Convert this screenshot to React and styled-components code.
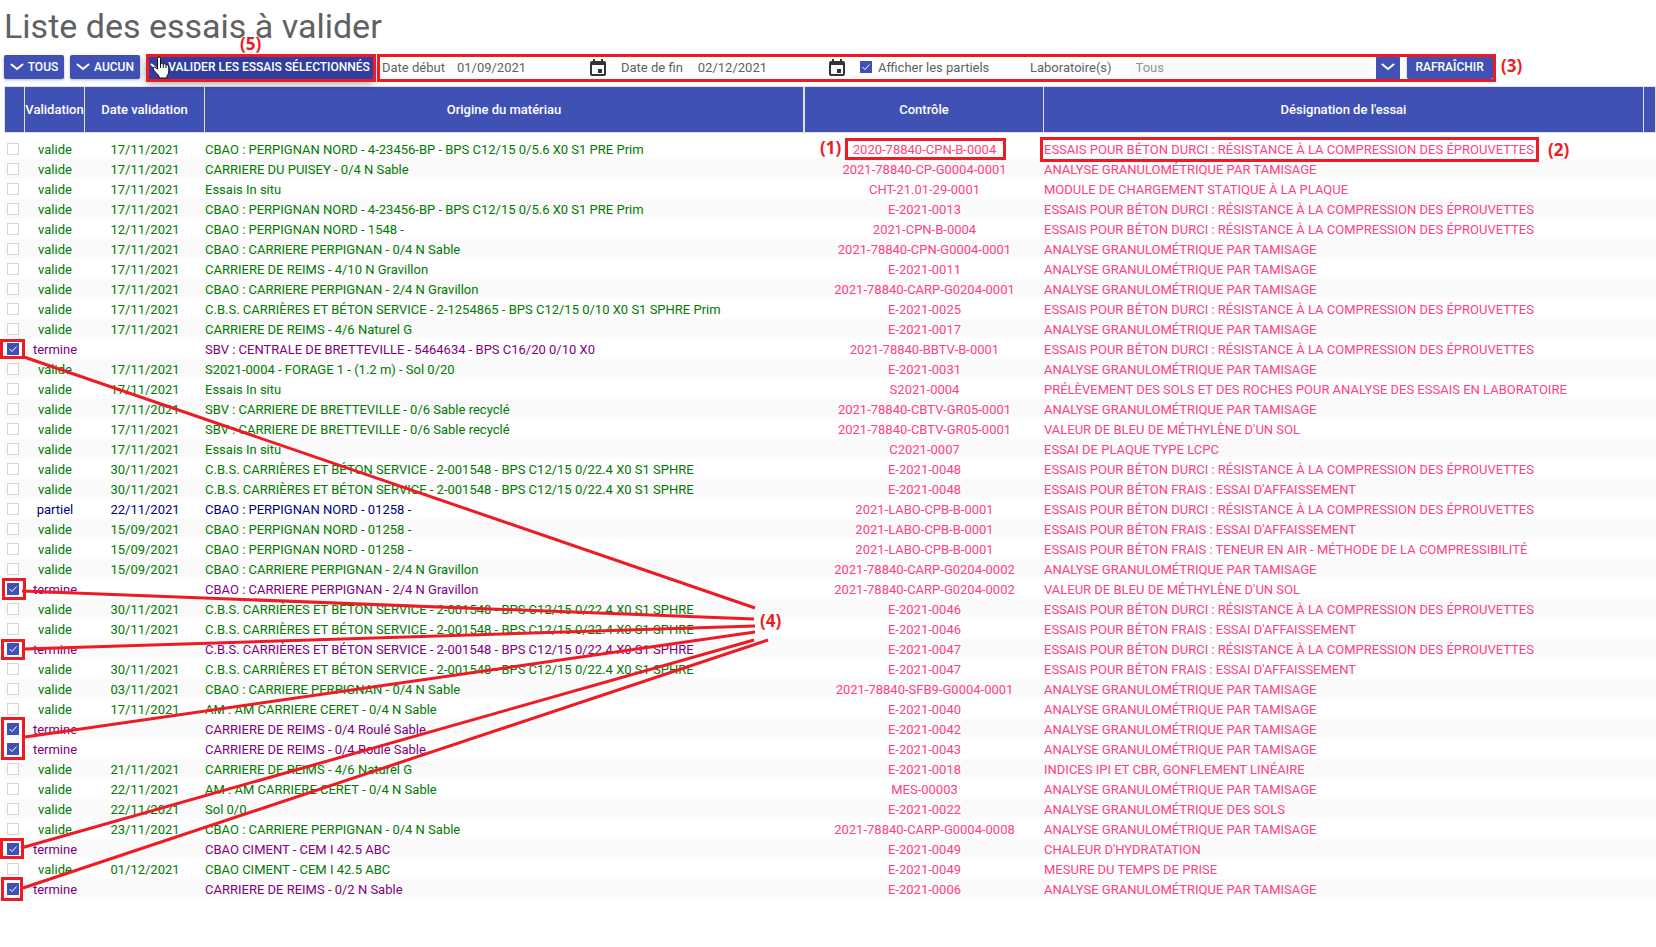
import { useState } from "react";
import styled, { createGlobalStyle } from "styled-components";

const V = "valide";
const T = "termine";
const P = "partiel";
const DURCI = "ESSAIS POUR BÉTON DURCI : RÉSISTANCE À LA COMPRESSION DES ÉPROUVETTES";
const AFFAISSEMENT = "ESSAIS POUR BÉTON FRAIS : ESSAI D'AFFAISSEMENT";
const TAMISAGE = "ANALYSE GRANULOMÉTRIQUE PAR TAMISAGE";
const BLEU = "VALEUR DE BLEU DE MÉTHYLÈNE D'UN SOL";
const CBS = "C.B.S. CARRIÈRES ET BÉTON SERVICE - 2-001548 - BPS C12/15 0/22.4 X0 S1 SPHRE";

const essais = [
  [V, "17/11/2021", "CBAO : PERPIGNAN NORD - 4-23456-BP - BPS C12/15 0/5.6 X0 S1 PRE Prim", "2020-78840-CPN-B-0004", DURCI],
  [V, "17/11/2021", "CARRIERE DU PUISEY - 0/4 N Sable", "2021-78840-CP-G0004-0001", TAMISAGE],
  [V, "17/11/2021", "Essais In situ", "CHT-21.01-29-0001", "MODULE DE CHARGEMENT STATIQUE À LA PLAQUE"],
  [V, "17/11/2021", "CBAO : PERPIGNAN NORD - 4-23456-BP - BPS C12/15 0/5.6 X0 S1 PRE Prim", "E-2021-0013", DURCI],
  [V, "12/11/2021", "CBAO : PERPIGNAN NORD - 1548 -", "2021-CPN-B-0004", DURCI],
  [V, "17/11/2021", "CBAO : CARRIERE PERPIGNAN - 0/4 N Sable", "2021-78840-CPN-G0004-0001", TAMISAGE],
  [V, "17/11/2021", "CARRIERE DE REIMS - 4/10 N Gravillon", "E-2021-0011", TAMISAGE],
  [V, "17/11/2021", "CBAO : CARRIERE PERPIGNAN - 2/4 N Gravillon", "2021-78840-CARP-G0204-0001", TAMISAGE],
  [V, "17/11/2021", "C.B.S. CARRIÈRES ET BÉTON SERVICE - 2-1254865 - BPS C12/15 0/10 X0 S1 SPHRE Prim", "E-2021-0025", DURCI],
  [V, "17/11/2021", "CARRIERE DE REIMS - 4/6 Naturel G", "E-2021-0017", TAMISAGE],
  [T, "", "SBV : CENTRALE DE BRETTEVILLE - 5464634 - BPS C16/20 0/10 X0", "2021-78840-BBTV-B-0001", DURCI],
  [V, "17/11/2021", "S2021-0004 - FORAGE 1 - (1.2 m) - Sol 0/20", "E-2021-0031", TAMISAGE],
  [V, "17/11/2021", "Essais In situ", "S2021-0004", "PRÉLÈVEMENT DES SOLS ET DES ROCHES POUR ANALYSE DES ESSAIS EN LABORATOIRE"],
  [V, "17/11/2021", "SBV : CARRIERE DE BRETTEVILLE - 0/6 Sable recyclé", "2021-78840-CBTV-GR05-0001", TAMISAGE],
  [V, "17/11/2021", "SBV : CARRIERE DE BRETTEVILLE - 0/6 Sable recyclé", "2021-78840-CBTV-GR05-0001", BLEU],
  [V, "17/11/2021", "Essais In situ", "C2021-0007", "ESSAI DE PLAQUE TYPE LCPC"],
  [V, "30/11/2021", CBS, "E-2021-0048", DURCI],
  [V, "30/11/2021", CBS, "E-2021-0048", AFFAISSEMENT],
  [P, "22/11/2021", "CBAO : PERPIGNAN NORD - 01258 -", "2021-LABO-CPB-B-0001", DURCI],
  [V, "15/09/2021", "CBAO : PERPIGNAN NORD - 01258 -", "2021-LABO-CPB-B-0001", AFFAISSEMENT],
  [V, "15/09/2021", "CBAO : PERPIGNAN NORD - 01258 -", "2021-LABO-CPB-B-0001", "ESSAIS POUR BÉTON FRAIS : TENEUR EN AIR - MÉTHODE DE LA COMPRESSIBILITÉ"],
  [V, "15/09/2021", "CBAO : CARRIERE PERPIGNAN - 2/4 N Gravillon", "2021-78840-CARP-G0204-0002", TAMISAGE],
  [T, "", "CBAO : CARRIERE PERPIGNAN - 2/4 N Gravillon", "2021-78840-CARP-G0204-0002", BLEU],
  [V, "30/11/2021", CBS, "E-2021-0046", DURCI],
  [V, "30/11/2021", CBS, "E-2021-0046", AFFAISSEMENT],
  [T, "", CBS, "E-2021-0047", DURCI],
  [V, "30/11/2021", CBS, "E-2021-0047", AFFAISSEMENT],
  [V, "03/11/2021", "CBAO : CARRIERE PERPIGNAN - 0/4 N Sable", "2021-78840-SFB9-G0004-0001", TAMISAGE],
  [V, "17/11/2021", "AM : AM CARRIERE CERET - 0/4 N Sable", "E-2021-0040", TAMISAGE],
  [T, "", "CARRIERE DE REIMS - 0/4 Roulé Sable", "E-2021-0042", TAMISAGE],
  [T, "", "CARRIERE DE REIMS - 0/4 Roulé Sable", "E-2021-0043", TAMISAGE],
  [V, "21/11/2021", "CARRIERE DE REIMS - 4/6 Naturel G", "E-2021-0018", "INDICES IPI ET CBR, GONFLEMENT LINÉAIRE"],
  [V, "22/11/2021", "AM : AM CARRIERE CERET - 0/4 N Sable", "MES-00003", TAMISAGE],
  [V, "22/11/2021", "Sol 0/0", "E-2021-0022", "ANALYSE GRANULOMÉTRIQUE DES SOLS"],
  [V, "23/11/2021", "CBAO : CARRIERE PERPIGNAN - 0/4 N Sable", "2021-78840-CARP-G0004-0008", TAMISAGE],
  [T, "", "CBAO CIMENT - CEM I 42.5 ABC", "E-2021-0049", "CHALEUR D'HYDRATATION"],
  [V, "01/12/2021", "CBAO CIMENT - CEM I 42.5 ABC", "E-2021-0049", "MESURE DU TEMPS DE PRISE"],
  [T, "", "CARRIERE DE REIMS - 0/2 N Sable", "E-2021-0006", TAMISAGE],
];

const colors = { valide: "#007a00", termine: "#800080", partiel: "#000080" };

// x, y, width, height of the red frames
const frames = [
  [146, 54, 230, 28],
  [377, 54, 1119, 28],
  [845, 138, 161, 22],
  [1040, 137, 499, 25],
  [0, 339, 25, 20],
  [2, 578, 24, 22],
  [1, 639, 24, 21],
  [1, 717, 24, 43],
  [0, 838, 24, 21],
  [1, 877, 22, 24],
];

const lines = [
  [24, 357, 755, 608],
  [22, 591, 754, 619],
  [24, 649, 755, 626],
  [25, 737, 755, 632],
  [21, 848, 754, 640],
  [23, 888, 768, 640],
];

const labels = [
  ["(1)", 820, 136],
  ["(2)", 1548, 138],
  ["(3)", 1501, 54],
  ["(4)", 760, 609],
  ["(5)", 240, 32],
];

const Chevron = () => (
  <svg width="14" height="8" viewBox="0 0 14 8" aria-hidden="true">
    <path d="M1.5 1.5 L7 6 L12.500 1.500" fill="none" stroke="#fff" strokeWidth="2" strokeLinecap="round" />
  </svg>
);

const CalendarIcon = () => (
  <svg width="16" height="17" viewBox="0 0 16 17" aria-hidden="true">
    <path
      fill="#333"
      fillRule="evenodd"
      d="M3 0h2v2h6V0h2v2h1q2 0 2 2v11q0 2-2 2H2q-2 0-2-2V4q0-2 2-2h1zM2 6v9h12V6zM8 10h4v4H8z"
    />
  </svg>
);

const Main = () => {
  const [checked, setChecked] = useState(essais.map((e) => e[0] === T));
  const [debut, setDebut] = useState("01/09/2021");
  const [fin, setFin] = useState("02/12/2021");
  const [partiels, setPartiels] = useState(true);

  const setAll = (value) => {
    setChecked(essais.map(() => value));
  };
  const toggle = (index) => {
    setChecked(checked.map((c, i) => (i === index ? !c : c)));
  };

  return (
    <PageDiv>
      <GlobalStyle />
      <Title>Liste des essais à valider</Title>
      <ToolbarDiv>
        <ActionButton $width={60} onClick={() => setAll(true)}>
          <Chevron />
          TOUS
        </ActionButton>
        <ActionButton $width={70} onClick={() => setAll(false)}>
          <Chevron />
          AUCUN
        </ActionButton>
        <ActionButton $width={228} $active>
          <Chevron />
          VALIDER LES ESSAIS SÉLECTIONNÉS
        </ActionButton>
        <FilterDiv>
          <DateDiv $gap={12}>
            <label htmlFor="debut">Date début</label>
            <DateInput id="debut" value={debut} onChange={(e) => setDebut(e.target.value)} />
            <IconButton aria-label="Choisir la date de début">
              <CalendarIcon />
            </IconButton>
          </DateDiv>
          <DateDiv $gap={15}>
            <label htmlFor="fin">Date de fin</label>
            <DateInput id="fin" value={fin} onChange={(e) => setFin(e.target.value)} />
            <IconButton aria-label="Choisir la date de fin">
              <CalendarIcon />
            </IconButton>
          </DateDiv>
          <CheckLabel>
            <CheckBox type="checkbox" checked={partiels} onChange={() => setPartiels(!partiels)} />
            Afficher les partiels
          </CheckLabel>
          <LaboDiv>
            <label htmlFor="labo">Laboratoire(s)</label>
            <LaboInput id="labo" placeholder="Tous" />
            <DropButton aria-label="Ouvrir la liste des laboratoires">
              <Chevron />
            </DropButton>
          </LaboDiv>
          <ActionButton $width={86}>RAFRAÎCHIR</ActionButton>
        </FilterDiv>
      </ToolbarDiv>

      <Table>
        <colgroup>
          <Col $width={21} />
          <Col $width={60} />
          <Col $width={120} />
          <Col $width={600} />
          <Col $width={239} />
          <Col $width={600} />
          <col />
        </colgroup>
        <thead>
          <tr>
            <Th />
            <Th>Validation</Th>
            <Th>Date validation</Th>
            <Th $wide>Origine du matériau</Th>
            <Th>Contrôle</Th>
            <Th>Désignation de l'essai</Th>
            <Th />
          </tr>
        </thead>
        <tbody>
          <SpacerTr>
            <td colSpan={7} />
          </SpacerTr>
          {essais.map(([statut, date, origine, controle, designation], i) => (
            <Tr key={i} $odd={i % 2 === 1} $color={colors[statut]}>
              <CheckTd>
                <CheckBox
                  type="checkbox"
                  aria-label={controle}
                  checked={checked[i]}
                  onChange={() => toggle(i)}
                />
              </CheckTd>
              <Td $center>{statut}</Td>
              <Td $center>{date}</Td>
              <Td>{origine}</Td>
              <Td $center>
                <Link href="#controle">{controle}</Link>
              </Td>
              <Td>
                <Link href="#essai">{designation}</Link>
              </Td>
              <Td />
            </Tr>
          ))}
        </tbody>
      </Table>

      <NotesSvg aria-hidden="true">
        {lines.map(([x1, y1, x2, y2]) => (
          <line key={y1} x1={x1} y1={y1} x2={x2} y2={y2} />
        ))}
        {frames.map(([x, y, w, h]) => (
          <rect key={x + "-" + y} x={x + 1.5} y={y + 1.5} width={w - 3} height={h - 3} />
        ))}
      </NotesSvg>
      {labels.map(([text, x, y]) => (
        <NoteSpan key={text} $x={x} $y={y}>
          {text}
        </NoteSpan>
      ))}
      <CursorSvg viewBox="0 0 18 23" aria-hidden="true">
        <path
          d="M5.500 13V2.500Q5.500 1 7 1T8.500 2.500V8Q8.500 7 10 7T11.300 8.500Q11.500 7.600 12.800 7.800T14 9.300Q14.500 8.600 15.500 9T16.800 11V15Q16.800 18 15 20V22H7V20L2 14.500Q.5 12.500 1.500 11.500T4 12Z"
          fill="#fff"
          stroke="#111"
        />
        <path d="M8.500 8V12M11.300 8.500V12M14 9.300V12" stroke="#111" fill="none" />
      </CursorSvg>
    </PageDiv>
  );
};

export default Main;

const GlobalStyle = createGlobalStyle`
  * {
    box-sizing: border-box;
  }
  body {
    margin: 0;
    background: #fff;
    color: #616161;
    font-family: Roboto, sans-serif;
    font-size: 13px;
  }
  button, input {
    font: inherit;
  }
`;

const PageDiv = styled.div`
  position: relative;
  padding: 0 0 48px 4px;
  overflow: hidden;
`;

const Title = styled.h1`
  margin: 0;
  height: 55px;
  padding-top: 5px;
  color: #616161;
  font-size: 34px;
  font-weight: 400;
  line-height: 42px;
`;

const ToolbarDiv = styled.div`
  display: flex;
  gap: 6px;
  height: 31px;
`;

const ActionButton = styled.button`
  display: flex;
  align-items: center;
  justify-content: center;
  flex: none;
  gap: 4px;
  width: ${(props) => props.$width}px;
  height: 24px;
  padding: 0;
  border: 0;
  border-radius: 2px;
  background: ${(props) => (props.$active ? "#303f9f" : "#3f51b5")};
  color: #fff;
  font-size: 12px;
  font-weight: 500;
  line-height: 16px;
  white-space: nowrap;
  box-shadow: ${(props) =>
    props.$active ? "0 4px 10px rgba(0, 0, 0, 0.4)" : "0 1px 3px rgba(0, 0, 0, 0.3)"};
`;

const FilterDiv = styled.div`
  display: flex;
  flex: none;
  height: 24px;
  padding-left: 2px;
  white-space: nowrap;
`;

const DateDiv = styled.div`
  display: flex;
  align-items: center;
  gap: ${(props) => props.$gap}px;
  width: 224px;
  margin-right: 15px;
`;

const DateInput = styled.input`
  flex: 1;
  min-width: 0;
  padding: 0;
  border: 0;
  background: none;
  color: #616161;
`;

const IconButton = styled.button`
  display: flex;
  padding: 0;
  border: 0;
  background: none;
`;

const CheckLabel = styled.label`
  display: flex;
  align-items: center;
  gap: 6px;
  width: 170px;
`;

const CheckBox = styled.input`
  display: block;
  appearance: none;
  width: 12px;
  height: 12px;
  margin: 0;
  border: 1px solid #d6d6d6;
  background: #fff;

  &:checked {
    border-color: #3f51b5;
    background: #3f51b5
      url("data:image/svg+xml,%3Csvg xmlns='http://www.w3.org/2000/svg' viewBox='0 0 10 10'%3E%3Cpath d='M1.500 5L4 7.500L8.500 2.500' fill='none' stroke='white'/%3E%3C/svg%3E");
  }
`;

const LaboDiv = styled.div`
  display: flex;
  align-items: center;
  margin-right: 7px;
`;

const LaboInput = styled.input`
  width: 240px;
  height: 22px;
  margin: 0 6px 0 18px;
  padding: 0 6px;
  border: 0;
  background: #fafafa;

  &::placeholder {
    color: #949494;
  }
`;

const DropButton = styled.button`
  display: flex;
  align-items: center;
  justify-content: center;
  width: 24px;
  height: 24px;
  padding: 0;
  border: 0;
  background: #3f51b5;
`;

const Table = styled.table`
  width: 100%;
  table-layout: fixed;
  border-collapse: separate;
  border-spacing: 0;
`;

const Col = styled.col`
  width: ${(props) => props.$width}px;
`;

const Th = styled.th`
  height: 47px;
  padding: 0;
  border: solid #e0e0e0;
  border-width: 1px ${(props) => (props.$wide ? 2 : 1)}px 1px 0;
  background: #3f51b5;
  color: #fff;
  font-weight: 500;
  white-space: nowrap;

  &:first-child {
    border-left-width: 1px;
  }
`;

const SpacerTr = styled.tr`
  height: 6px;

  td {
    padding: 0;
  }
`;

const Tr = styled.tr`
  height: 20px;
  background: ${(props) => (props.$odd ? "#fafafa" : "#fff")};
  color: ${(props) => props.$color};
`;

const CheckTd = styled.td`
  padding: 0 0 0 3px;
`;

const Td = styled.td`
  padding: 2px 0 0;
  line-height: 18px;
  text-align: ${(props) => (props.$center ? "center" : "left")};
  white-space: nowrap;
`;

const Link = styled.a`
  color: #ff4081;
  text-decoration: none;
`;

/* annotations drawn over the page */
const NotesSvg = styled.svg`
  position: absolute;
  top: 0;
  left: 0;
  width: 100%;
  height: 100%;
  fill: none;
  stroke: #ed1c24;
  stroke-width: 3px;
  pointer-events: none;
`;

const NoteSpan = styled.span`
  position: absolute;
  top: ${(props) => props.$y}px;
  left: ${(props) => props.$x}px;
  color: #ed1c24;
  font-family: "Open Sans", sans-serif;
  font-size: 17px;
  font-weight: 700;
  line-height: 24px;
`;

const CursorSvg = styled.svg`
  position: absolute;
  top: 56px;
  left: 152px;
  width: 18px;
  height: 23px;
  pointer-events: none;
`;
